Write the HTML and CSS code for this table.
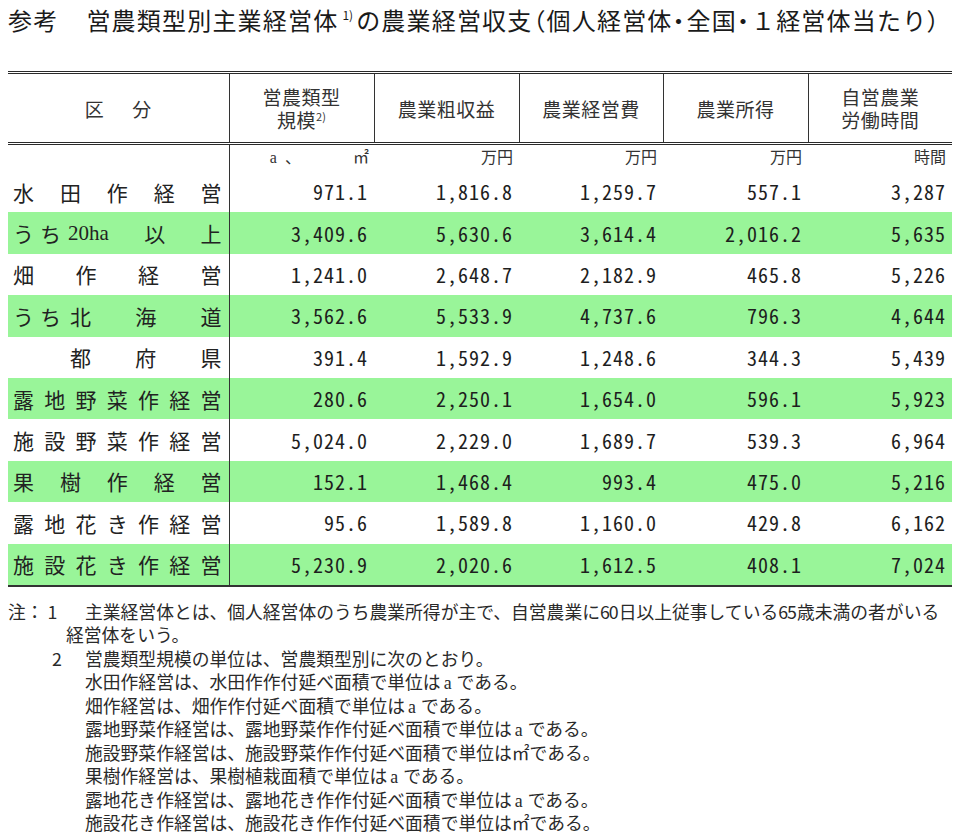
FILE: index.html
```html
<!DOCTYPE html>
<html lang="ja">
<head>
<meta charset="utf-8">
<title>営農類型別主業経営体の農業経営収支</title>
<link rel="stylesheet" href="styles.css">
</head>
<body>
<div class="page">
  <h1 class="title"><span class="ref">参考</span>営農類型別主業経営体<sup class="tsup">1)</sup>の農業経営収支<span class="p">（</span>個人経営体<span class="p">・</span>全国<span class="p">・</span>１経営体当たり<span class="p">）</span></h1>

  <table class="stats">
    <colgroup>
      <col class="c0"><col class="c1"><col class="c2"><col class="c3"><col class="c4"><col class="c5">
    </colgroup>
    <thead>
      <tr>
        <th class="kubun"><span>区</span><span>分</span></th>
        <th><div class="hl">営農類型</div><div class="hl">規模<sup class="hsup">2)</sup></div></th>
        <th>農業粗収益</th>
        <th>農業経営費</th>
        <th>農業所得</th>
        <th><div class="hl">自営農業</div><div class="hl">労働時間</div></th>
      </tr>
    </thead>
    <tbody>
      <tr class="units">
        <td class="label"></td>
        <td class="unit-serif"><span>a</span><span class="u-comma">、</span><span class="u-m2">㎡</span></td>
        <td>万円</td>
        <td>万円</td>
        <td>万円</td>
        <td>時間</td>
      </tr>
      <tr>
        <td class="label"><div class="dist"><span>水</span><span>田</span><span>作</span><span>経</span><span>営</span></div></td>
        <td class="num">971.1</td><td class="num">1,816.8</td><td class="num">1,259.7</td><td class="num">557.1</td><td class="num">3,287</td>
      </tr>
      <tr class="g">
        <td class="label"><div class="row-pre"><span class="pre">うち</span><div class="dist sub"><span class="latin">20ha</span><span>以</span><span>上</span></div></div></td>
        <td class="num">3,409.6</td><td class="num">5,630.6</td><td class="num">3,614.4</td><td class="num">2,016.2</td><td class="num">5,635</td>
      </tr>
      <tr>
        <td class="label"><div class="dist"><span>畑</span><span>作</span><span>経</span><span>営</span></div></td>
        <td class="num">1,241.0</td><td class="num">2,648.7</td><td class="num">2,182.9</td><td class="num">465.8</td><td class="num">5,226</td>
      </tr>
      <tr class="g">
        <td class="label"><div class="row-pre"><span class="pre">うち</span><div class="dist sub"><span>北</span><span>海</span><span>道</span></div></div></td>
        <td class="num">3,562.6</td><td class="num">5,533.9</td><td class="num">4,737.6</td><td class="num">796.3</td><td class="num">4,644</td>
      </tr>
      <tr>
        <td class="label"><div class="row-pre"><span class="pre"></span><div class="dist sub"><span>都</span><span>府</span><span>県</span></div></div></td>
        <td class="num">391.4</td><td class="num">1,592.9</td><td class="num">1,248.6</td><td class="num">344.3</td><td class="num">5,439</td>
      </tr>
      <tr class="g">
        <td class="label"><div class="dist"><span>露</span><span>地</span><span>野</span><span>菜</span><span>作</span><span>経</span><span>営</span></div></td>
        <td class="num">280.6</td><td class="num">2,250.1</td><td class="num">1,654.0</td><td class="num">596.1</td><td class="num">5,923</td>
      </tr>
      <tr>
        <td class="label"><div class="dist"><span>施</span><span>設</span><span>野</span><span>菜</span><span>作</span><span>経</span><span>営</span></div></td>
        <td class="num">5,024.0</td><td class="num">2,229.0</td><td class="num">1,689.7</td><td class="num">539.3</td><td class="num">6,964</td>
      </tr>
      <tr class="g">
        <td class="label"><div class="dist"><span>果</span><span>樹</span><span>作</span><span>経</span><span>営</span></div></td>
        <td class="num">152.1</td><td class="num">1,468.4</td><td class="num">993.4</td><td class="num">475.0</td><td class="num">5,216</td>
      </tr>
      <tr>
        <td class="label"><div class="dist"><span>露</span><span>地</span><span>花</span><span>き</span><span>作</span><span>経</span><span>営</span></div></td>
        <td class="num">95.6</td><td class="num">1,589.8</td><td class="num">1,160.0</td><td class="num">429.8</td><td class="num">6,162</td>
      </tr>
      <tr class="g last">
        <td class="label"><div class="dist"><span>施</span><span>設</span><span>花</span><span>き</span><span>作</span><span>経</span><span>営</span></div></td>
        <td class="num">5,230.9</td><td class="num">2,020.6</td><td class="num">1,612.5</td><td class="num">408.1</td><td class="num">7,024</td>
      </tr>
    </tbody>
  </table>

  <div class="notes">
    <div class="line"><span class="mark">注<span class="colon">：</span>1</span>主業経営体とは、個人経営体のうち農業所得が主で、自営農業に<span class="nd">60</span>日以上従事している<span class="nd">65</span>歳未満の者がいる</div>
    <div class="line cont">経営体をいう。</div>
    <div class="line second"><span class="mark2">2</span>営農類型規模の単位は、営農類型別に次のとおり。</div>
    <div class="line ind">水田作経営は、水田作作付延べ面積で単位は<span class="ua">a</span>である。</div>
    <div class="line ind">畑作経営は、畑作作付延べ面積で単位は<span class="ua">a</span>である。</div>
    <div class="line ind">露地野菜作経営は、露地野菜作作付延べ面積で単位は<span class="ua">a</span>である。</div>
    <div class="line ind">施設野菜作経営は、施設野菜作作付延べ面積で単位は㎡である。</div>
    <div class="line ind">果樹作経営は、果樹植栽面積で単位は<span class="ua">a</span>である。</div>
    <div class="line ind">露地花き作経営は、露地花き作作付延べ面積で単位は<span class="ua">a</span>である。</div>
    <div class="line ind">施設花き作経営は、施設花き作作付延べ面積で単位は㎡である。</div>
  </div>
</div>
</body>
</html>
```

FILE: styles.css
```css
html, body {
  margin: 0;
  padding: 0;
  background: #ffffff;
}

body {
  color: #1c1c1c;
  font-family: "Noto Sans CJK JP", "Noto Sans", sans-serif;
}

.page {
  padding: 7px 8px 0 8px;
}

/* ---------- title ---------- */
.title {
  margin: 0;
  font-size: 24px;
  font-weight: 400;
  line-height: 26px;
  letter-spacing: 1.2px;
  white-space: nowrap;
  color: #1a1a1a;
}

.title .ref {
  margin-right: 28px;
}

.title .p {
  font-feature-settings: "palt";
  letter-spacing: 2px;
}

.tsup {
  font-size: 12px;
  vertical-align: 10px;
  line-height: 0;
  margin: 0 3px 0 4px;
  letter-spacing: 0;
}

/* ---------- table ---------- */
.stats {
  margin-top: 38px;
  border-collapse: collapse;
  table-layout: fixed;
  width: 944px;
}

.c0 { width: 221px; }
.c1 { width: 145px; }
.c2 { width: 145px; }
.c3 { width: 144px; }
.c4 { width: 145px; }
.c5 { width: 144px; }

.stats thead th {
  height: 68px;
  padding: 0;
  border-top: 3px double #2a2a2a;
  border-bottom: 3px double #2a2a2a;
  border-left: 1px solid #333;
  font-size: 19px;
  font-weight: 400;
  line-height: 23px;
  color: #333;
  text-align: center;
  vertical-align: middle;
  letter-spacing: 0.5px;
}

.stats thead th:first-child {
  border-left: none;
}

.hl {
  height: 23px;
  line-height: 23px;
}

.kubun span + span {
  margin-left: 28px;
}

.hsup {
  font-size: 11px;
  vertical-align: 7px;
  line-height: 0;
  letter-spacing: 0;
}

.stats td {
  padding: 0 6px 0 0;
  height: 41.4px;
  text-align: right;
  vertical-align: middle;
  white-space: nowrap;
}

.stats td.label {
  padding: 0 7px 0 5px;
  border-right: 1px solid #333;
  text-align: left;
  font-size: 21px;
  color: #222;
}

.stats tr.units td {
  height: 24px;
  padding: 2px 6px 0 0;
  font-size: 16px;
  line-height: 18px;
  color: #333;
  vertical-align: top;
}

.stats tr.units td.label {
  padding: 0;
}

.stats tr.units td.unit-serif {
  font-family: "Liberation Serif", "Noto Sans CJK JP", serif;
  font-size: 16px;
  padding-right: 5px;
}

.u-comma {
  font-family: "Noto Sans CJK JP", sans-serif;
  margin-left: 8px;
}

.u-m2 {
  font-family: "Noto Sans CJK JP", sans-serif;
  margin-left: 52px;
}

.stats tr.g td {
  background: #99f599;
}

.stats tr.last td {
  border-bottom: 2px solid #333;
}

.num {
  font-family: "Noto Sans Mono CJK JP", "Noto Sans CJK JP", monospace;
  font-feature-settings: "hwid";
  font-size: 20px;
  letter-spacing: 1px;
  color: #1e1e1e;
}

.dist {
  display: flex;
  justify-content: space-between;
  align-items: center;
}

.row-pre {
  display: flex;
  align-items: center;
}

.pre {
  width: 57px;
  flex: none;
  letter-spacing: 6px;
}

.dist.sub {
  flex: 1;
}

.latin {
  font-family: "Liberation Serif", serif;
  font-size: 21px;
  margin-left: -2px;
}

/* ---------- notes ---------- */
.notes {
  margin-top: 13px;
  font-size: 17.8px;
  color: #2a2a2a;
  white-space: nowrap;
}

.line {
  height: 23.5px;
  line-height: 23.5px;
}

.line.cont { padding-left: 58px; }
.line.second { padding-left: 44px; }
.line.ind { padding-left: 77px; }

.mark {
  display: inline-block;
  width: 77px;
}

.mark .colon {
  margin: 0 4px 0 0;
}

.mark2 {
  display: inline-block;
  width: 33px;
}

.nd {
  letter-spacing: -1px;
  margin-right: 1px;
}

.ua {
  font-family: "Liberation Serif", serif;
  line-height: 0;
  margin: 0 5px 0 3px;
}
```
